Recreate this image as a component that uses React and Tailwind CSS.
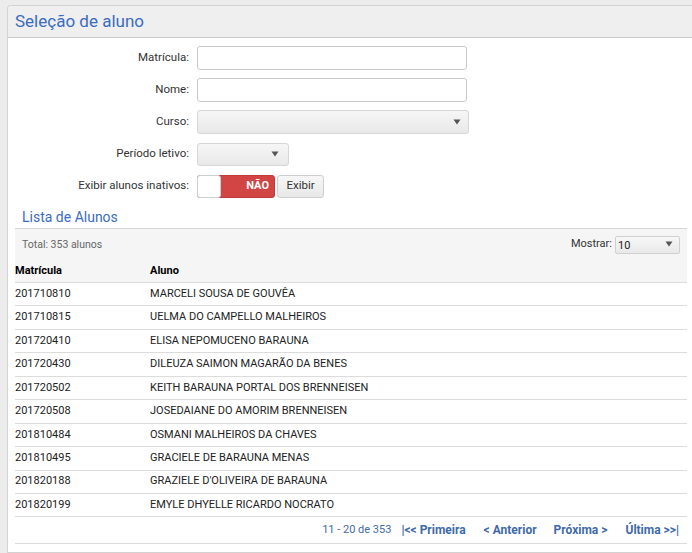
const alunos = [
  ['201710810', 'MARCELI SOUSA DE GOUVÊA'],
  ['201710815', 'UELMA DO CAMPELLO MALHEIROS'],
  ['201720410', 'ELISA NEPOMUCENO BARAUNA'],
  ['201720430', 'DILEUZA SAIMON MAGARÃO DA BENES'],
  ['201720502', 'KEITH BARAUNA PORTAL DOS BRENNEISEN'],
  ['201720508', 'JOSEDAIANE DO AMORIM BRENNEISEN'],
  ['201810484', 'OSMANI MALHEIROS DA CHAVES'],
  ['201810495', 'GRACIELE DE BARAUNA MENAS'],
  ['201820188', "GRAZIELE D'OLIVEIRA DE BARAUNA"],
  ['201820199', 'EMYLE DHYELLE RICARDO NOCRATO'],
];

function Caret() {
  return (
    <svg width="8" height="6" viewBox="0 0 8 6" className="shrink-0">
      <path d="M0.5 0.5h7L4 5.5z" fill="#555" />
    </svg>
  );
}

function Row({ label, children }) {
  return (
    <div className="flex items-center h-[24px]">
      <div className="w-[189px] text-right pr-[8px] text-[11.5px] text-[#333]">{label}</div>
      {children}
    </div>
  );
}

export default function App() {
  return (
    <div
      className="min-h-[553px] bg-[#ececec] pt-[5px] pl-[7px] text-[12px] text-[#222]"
      style={{ fontFamily: 'Roboto, "Open Sans", sans-serif' }}
    >
      <div className="bg-white border border-[#d2d2d2] border-r-0 rounded-tl-[4px] min-h-[548px]">
        {/* header */}
        <div className="h-[32px] bg-[#efefef] border-b border-[#c9c9c9] flex items-center pl-[7px] rounded-tl-[4px]">
          <h1 className="text-[17px] text-[#3b6cc0] leading-none">Seleção de aluno</h1>
        </div>

        {/* form */}
        <div className="pt-[8px] flex flex-col gap-[8px]">
          <Row label="Matrícula:">
            <input className="w-[270px] h-[24px] border border-[#c8c8c8] rounded-[3px] outline-none" />
          </Row>
          <Row label="Nome:">
            <input className="w-[270px] h-[24px] border border-[#c8c8c8] rounded-[3px] outline-none" />
          </Row>
          <Row label="Curso:">
            <div className="w-[272px] h-[24px] border border-[#d6d6d6] rounded-[3px] bg-gradient-to-b from-[#f6f6f6] to-[#e9e9e9] flex items-center justify-end pr-[7px]">
              <Caret />
            </div>
          </Row>
          <Row label="Período letivo:">
            <div className="w-[92px] h-[23px] border border-[#d6d6d6] rounded-[3px] bg-gradient-to-b from-[#f6f6f6] to-[#e9e9e9] flex items-center justify-end pr-[9px]">
              <Caret />
            </div>
          </Row>
          <Row label="Exibir alunos inativos:">
            <div className="flex items-center gap-[2px]">
              <div className="w-[78px] h-[23px] rounded-[3px] bg-[#d24545] border border-[#c03a3a] flex items-center relative">
                <div className="absolute left-[-1px] top-[-1px] w-[24px] h-[23px] bg-white border border-[#cfcfcf] rounded-[3px]" />
                <span className="ml-auto pr-[5px] text-white text-[11px] font-bold">NÃO</span>
              </div>
              <button className="h-[23px] w-[47px] border border-[#cfcfcf] rounded-[3px] bg-gradient-to-b from-[#f7f7f7] to-[#e8e8e8] text-[11.5px] text-[#333]">
                Exibir
              </button>
            </div>
          </Row>
        </div>

        {/* list */}
        <div className="px-[7px] mt-[8px]">
          <h2 className="pl-[7px] text-[14px] text-[#3b6cc0] leading-[22px]">Lista de Alunos</h2>
          <div className="w-[672px] text-[11px]">
            <div className="bg-[#f5f5f5] border-t border-[#d6d6d6]">
              <div className="flex items-center justify-between h-[31px] pl-[7px] pr-[7px]">
                <span className="text-[10.5px] text-[#666]">Total: 353 alunos</span>
                <div className="flex items-center gap-[3px]">
                  <span className="text-[#333]">Mostrar:</span>
                  <div className="w-[65px] h-[18px] border border-[#d0d0d0] rounded-[2px] bg-gradient-to-b from-[#f7f7f7] to-[#e9e9e9] flex items-center justify-between pl-[2px] pr-[6px] text-[#222] pt-[3px]">
                    <span>10</span>
                    <span className="-mt-[5px]"><Caret /></span>
                  </div>
                </div>
              </div>
              <div className="flex items-center h-[23px] font-bold text-black border-b border-[#dcdcdc]">
                <span className="w-[135px]">Matrícula</span>
                <span>Aluno</span>
              </div>
            </div>
            {alunos.map(([m, n]) => (
              <div key={m} className="flex items-center h-[23.45px] border-b border-[#dcdcdc] text-[#222]">
                <span className="w-[135px]">{m}</span>
                <span>{n}</span>
              </div>
            ))}
            <div className="flex items-center justify-end h-[27px] border-b border-[#dcdcdc] pr-[8px] text-[#3f6aa8]">
              <span className="mr-[10px]">11 - 20 de 353</span>
              <span className="text-[12px] font-bold mr-[18px]">|&lt;&lt; Primeira</span>
              <span className="text-[12px] font-bold mr-[17px]">&lt; Anterior</span>
              <span className="text-[12px] font-bold mr-[18px]">Próxima &gt;</span>
              <span className="text-[12px] font-bold">Última &gt;&gt;|</span>
            </div>
          </div>
        </div>
      </div>
    </div>
  );
}
